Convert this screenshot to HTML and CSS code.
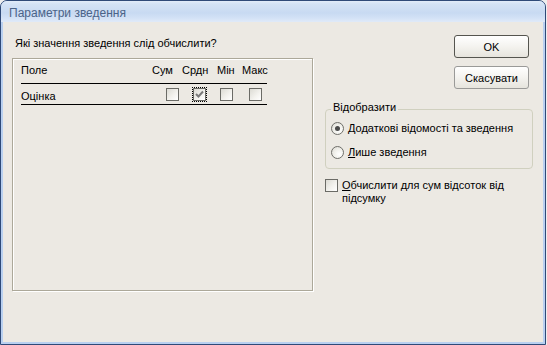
FILE: index.html
```html
<!DOCTYPE html>
<html lang="uk">
<head>
<meta charset="utf-8">
<link rel="stylesheet" href="styles.css">
</head>
<body>
<div class="win">
  <div class="titlebar">Параметри зведення</div>
  <div class="body">
    <div class="left">
      <div class="question">Які значення зведення слід обчислити?</div>
      <div class="etched">
        <div class="row head">
          <span class="name">Поле</span>
          <span class="c c1">Сум</span>
          <span class="c c2">Срдн</span>
          <span class="c c3">Мін</span>
          <span class="c c4">Макс</span>
        </div>
        <div class="row data">
          <span class="name">Оцінка</span>
          <span class="c c1"><span class="cb"></span></span>
          <span class="c c2"><span class="focus"><span class="cb checked"><svg width="11" height="11" viewBox="0 0 11 11"><polyline points="2,5 4.5,7.5 9,2.5" fill="none" stroke="#7a7a7a" stroke-width="2"/></svg></span></span></span>
          <span class="c c3"><span class="cb"></span></span>
          <span class="c c4"><span class="cb"></span></span>
        </div>
      </div>
    </div>
    <div class="right">
      <button class="btn default">OK</button>
      <button class="btn">Скасувати</button>
      <div class="group">
        <span class="legend">Відобразити</span>
        <div class="radio-row"><span class="radio on"></span><span>Додаткові відомості та зведення</span></div>
        <div class="radio-row"><span class="radio"></span><span><u>Л</u>ише зведення</span></div>
      </div>
      <div class="chk">
        <span class="cb"></span>
        <span class="chk-text"><u>О</u>бчислити для сум відсоток від підсумку</span>
      </div>
    </div>
  </div>
</div>
</body>
</html>
```

FILE: styles.css
```css
* { box-sizing: border-box; }
html, body { margin: 0; padding: 0; background: #eeeeee; }
body {
  font-family: "Liberation Sans", Arial, sans-serif;
  font-size: 11px;
  color: #000;
}
.win {
  width: 546px;
  height: 345px;
  border: 1px solid #2f4a78;
  border-radius: 7px 7px 0 0;
  overflow: hidden;
  display: flex;
  flex-direction: column;
  background: #b9d0f0;
}
.titlebar {
  height: 21px;
  padding: 3px 0 0 8px;
  line-height: 18px;
  font-size: 12px;
  color: #4a6388;
  background: linear-gradient(#e2ecf9 0, #d3e2f5 3px, #c8daf2 12px, #d3e2f6 17px, #e0eaf8 21px);
}
.body {
  flex: 1;
  background: #ece9e3;
  margin: 0 2px 2px 2px;
  display: flex;
  padding: 13px 0 0 9px;
  gap: 12px;
}
.left { width: 301px; }
.question {
  margin-top: 2px;
  padding-left: 3px;
  line-height: 13px;
}
.etched {
  margin-top: 8px;
  height: 233px;
  width: 301px;
  border: 1px solid #aca899;
  box-shadow: inset 1px 1px 0 #fff, 1px 1px 0 #fff;
  padding-left: 8px;
}
.row {
  display: flex;
  width: 246px;
  border-bottom: 1px solid #000;
  align-items: flex-start;
}
.row.head { height: 25px; padding-top: 5px; line-height: 13px; }
.row.data { height: 21px; line-height: 13px; }
.name { width: 129px; }
.row.data .name { margin-top: 6px; }
.c { display: block; }
.c1 { width: 31px; }
.c2 { width: 34px; }
.c3 { width: 25px; }
.c4 { width: 27px; }
.head .c1 { padding-left: 2px; }
.head .c2 { padding-left: 1px; }
.head .c3 { padding-left: 2px; }
.head .c4 { padding-left: 2px; }
.data .c { padding-top: 4px; }
.data .c1 .cb { margin-left: 16px; }
.data .c2 .focus { margin-left: 11px; }
.data .c3 .cb { margin-left: 5px; }
.data .c4 .cb { margin-left: 9px; }
.cb {
  display: block;
  width: 13px;
  height: 13px;
  border: 1px solid #6b6b66;
  background: linear-gradient(135deg, #dcdbd4 0%, #f4f3ef 60%, #ffffff 100%);
}
.cb svg { display: block; }
.focus {
  display: block;
  width: 15px;
  height: 15px;
  margin-top: -1px;
  border: 1px dotted #000;
  padding: 0;
}
.focus .cb { margin: 0; }
.right {
  width: 208px;
  display: flex;
  flex-direction: column;
  align-items: flex-start;
}
.btn {
  margin-left: 129px;
  width: 75px;
  height: 23px;
  font: inherit;
  color: #000;
  border: 1px solid #9a9a98;
  border-radius: 3px;
  background: linear-gradient(#ffffff, #f4f3ef 50%, #e6e4dd);
  padding: 0;
}
.btn.default { border-color: #55554f; }
.btn + .btn { margin-top: 8px; }
.group {
  margin-top: 20px;
  width: 208px;
  height: 60px;
  border: 1px solid #d0d0bf;
  border-radius: 4px;
  padding-left: 5px;
}
.legend {
  display: table;
  margin: -9px 0 0 0;
  padding: 0 2px;
  line-height: 13px;
  background: #ece9e3;
}
.radio-row {
  display: flex;
  align-items: center;
  height: 24px;
  gap: 4px;
}
.legend + .radio-row { margin-top: 2px; }
.radio {
  width: 13px;
  height: 13px;
  border-radius: 50%;
  border: 1px solid #6f6f6a;
  background: radial-gradient(circle at 65% 65%, #ffffff 0%, #f0efea 50%, #d8d7d0 100%);
  display: flex;
  align-items: center;
  justify-content: center;
}
.radio.on::after {
  content: "";
  width: 5px;
  height: 5px;
  border-radius: 50%;
  background: #4a4a4a;
}
.chk {
  margin-top: 10px;
  display: flex;
  gap: 4px;
  align-items: flex-start;
}
.chk .cb { margin-top: 0; }
.chk-text {
  width: 180px;
  line-height: 13px;
  margin-top: 0;
}
```
